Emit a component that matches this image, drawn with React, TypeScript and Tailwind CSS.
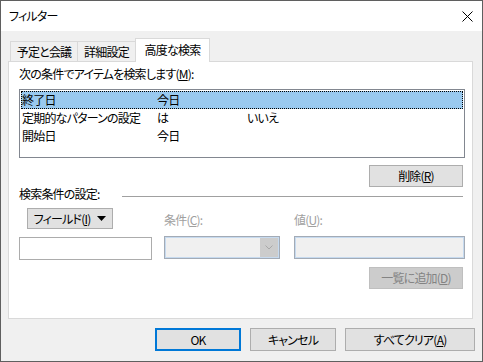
import React from 'react';

const rows = [
  { field: '終了日', cond: '今日', value: '', selected: true },
  { field: '定期的なパターンの設定', cond: 'は', value: 'いいえ', selected: false },
  { field: '開始日', cond: '今日', value: '', selected: false },
];

const Btn: React.FC<{ children: React.ReactNode; className?: string }> = ({ children, className = '' }) => (
  <div className={`flex items-center justify-center bg-[#e1e1e1] border border-[#adadad] ${className}`}>{children}</div>
);

const App: React.FC = () => {
  return (
    <div className="w-[483px] h-[362px] border border-[#5f5f5f] bg-[#f0f0f0] flex flex-col text-[12px] tracking-[-0.8px] text-black font-['Noto_Sans_CJK_JP',sans-serif] [font-feature-settings:'palt']">
      {/* title bar */}
      <div className="h-[30px] bg-white flex items-center justify-between pl-[8px] pr-[9px] shrink-0">
        <span className="leading-[16px]">フィルター</span>
        <svg width="11" height="11" viewBox="0 0 11 11">
          <path d="M0.5 0.5 L10.5 10.5 M10.5 0.5 L0.5 10.5" stroke="#000" strokeWidth="1" />
        </svg>
      </div>

      <div className="pl-[7px] pr-[9px] pt-[7px] flex flex-col">
        {/* tabs */}
        <div className="h-[23px] flex items-end pl-[2px]">
          <div className="w-[68px] h-[20px] border border-b-0 border-[#d9d9d9] bg-[#f0f0f0] flex items-center justify-center leading-[16px]">
            予定と会議
          </div>
          <div className="w-[59px] h-[20px] -ml-px border border-b-0 border-[#d9d9d9] bg-[#f0f0f0] flex items-center justify-center leading-[16px]">
            詳細設定
          </div>
          <div className="w-[75px] h-[24px] -ml-px -mb-px relative z-10 border border-b-0 border-[#d9d9d9] bg-white flex items-center justify-center leading-[16px] pb-[2px]">
            高度な検索
          </div>
        </div>

        {/* tab panel */}
        <div className="h-[258px] border border-[#d9d9d9] bg-white pl-[10px] pr-[7px] flex flex-col">
          <div className="mt-[4px] h-[16px] leading-[16px]">
            次の条件でアイテムを検索します(<u>M</u>):
          </div>

          <div className="mt-[7px] h-[69px] border border-[#828790] p-px flex flex-col">
            {rows.map((r, i) => (
              <div
                key={i}
                className={`h-[18px] shrink-0 flex items-center leading-[16px] border ${
                  r.selected ? 'bg-[#99c9ef] border-dotted border-black' : 'border-transparent'
                }`}
              >
                <span className="w-[135px] shrink-0 whitespace-nowrap">{r.field}</span>
                <span className="w-[90px] shrink-0">{r.cond}</span>
                <span>{r.value}</span>
              </div>
            ))}
          </div>

          <Btn className="mt-[7px] self-end mr-[2px] w-[94px] h-[22px]">
            削除(<u>R</u>)
          </Btn>

          <div className="h-[14px] flex">
            <span className="w-[103px] leading-[14px] shrink-0 whitespace-nowrap">検索条件の設定:</span>
            <div className="flex-1 mr-[2px] mt-[9px] h-px bg-[#a0a0a0]" />
          </div>

          {/* labels row */}
          <div className="mt-[7px] h-[21px] flex items-center">
            <div className="w-[133px] shrink-0">
              <Btn className="ml-[8px] w-[86px] h-[21px] gap-[7px]">
                <span>フィールド(<u>I</u>)</span>
                <svg width="9" height="5" viewBox="0 0 9 5">
                  <path d="M0 0 L9 0 L4.5 5 Z" fill="#000" />
                </svg>
              </Btn>
            </div>
            <div className="ml-[12px] w-[116px] shrink-0 text-[#a0a0a0] mt-[2px]">
              条件(<u>C</u>):
            </div>
            <div className="ml-[14px] text-[#a0a0a0] mt-[2px]">
              値(<u>U</u>):
            </div>
          </div>

          {/* fields row */}
          <div className="mt-[7px] h-[23px] flex">
            <div className="w-[133px] shrink-0 border border-[#acacac] bg-white mt-px h-[23px]" />
            <div className="ml-[12px] w-[116px] shrink-0 border border-[#a3abb6] shadow-[inset_0_0_0_1px_#c6daef] bg-[#f0f0f0] flex justify-end p-px">
              <div className="w-[18px] bg-[#cccccc] flex items-center justify-center">
                <svg width="8" height="5" viewBox="0 0 8 5">
                  <path d="M0.5 0.5 L4 4 L7.5 0.5" stroke="#a8a8a8" strokeWidth="1" fill="none" />
                </svg>
              </div>
            </div>
            <div className="ml-[14px] flex-1 border border-[#a3abb6] shadow-[inset_0_0_0_1px_#c6daef] bg-[#f0f0f0]" />
          </div>

          <div className="mt-[8px] self-end mr-[2px] w-[94px] h-[22px] flex items-center justify-center bg-[#cccccc] border border-[#bfbfbf] text-[#838383]">
            一覧に追加(<u>D</u>)
          </div>
        </div>

        {/* bottom buttons */}
        <div className="mt-[9px] flex justify-end gap-[9px] -mr-[2px]">
          <div className="w-[86px] h-[23px] flex items-center justify-center bg-[#e1e1e1] border-2 border-[#0078d7]">OK</div>
          <Btn className="w-[86px] h-[23px]">キャンセル</Btn>
          <Btn className="w-[130px] h-[23px]">
            すべてクリア(<u>A</u>)
          </Btn>
        </div>
      </div>
    </div>
  );
};

export default App;
